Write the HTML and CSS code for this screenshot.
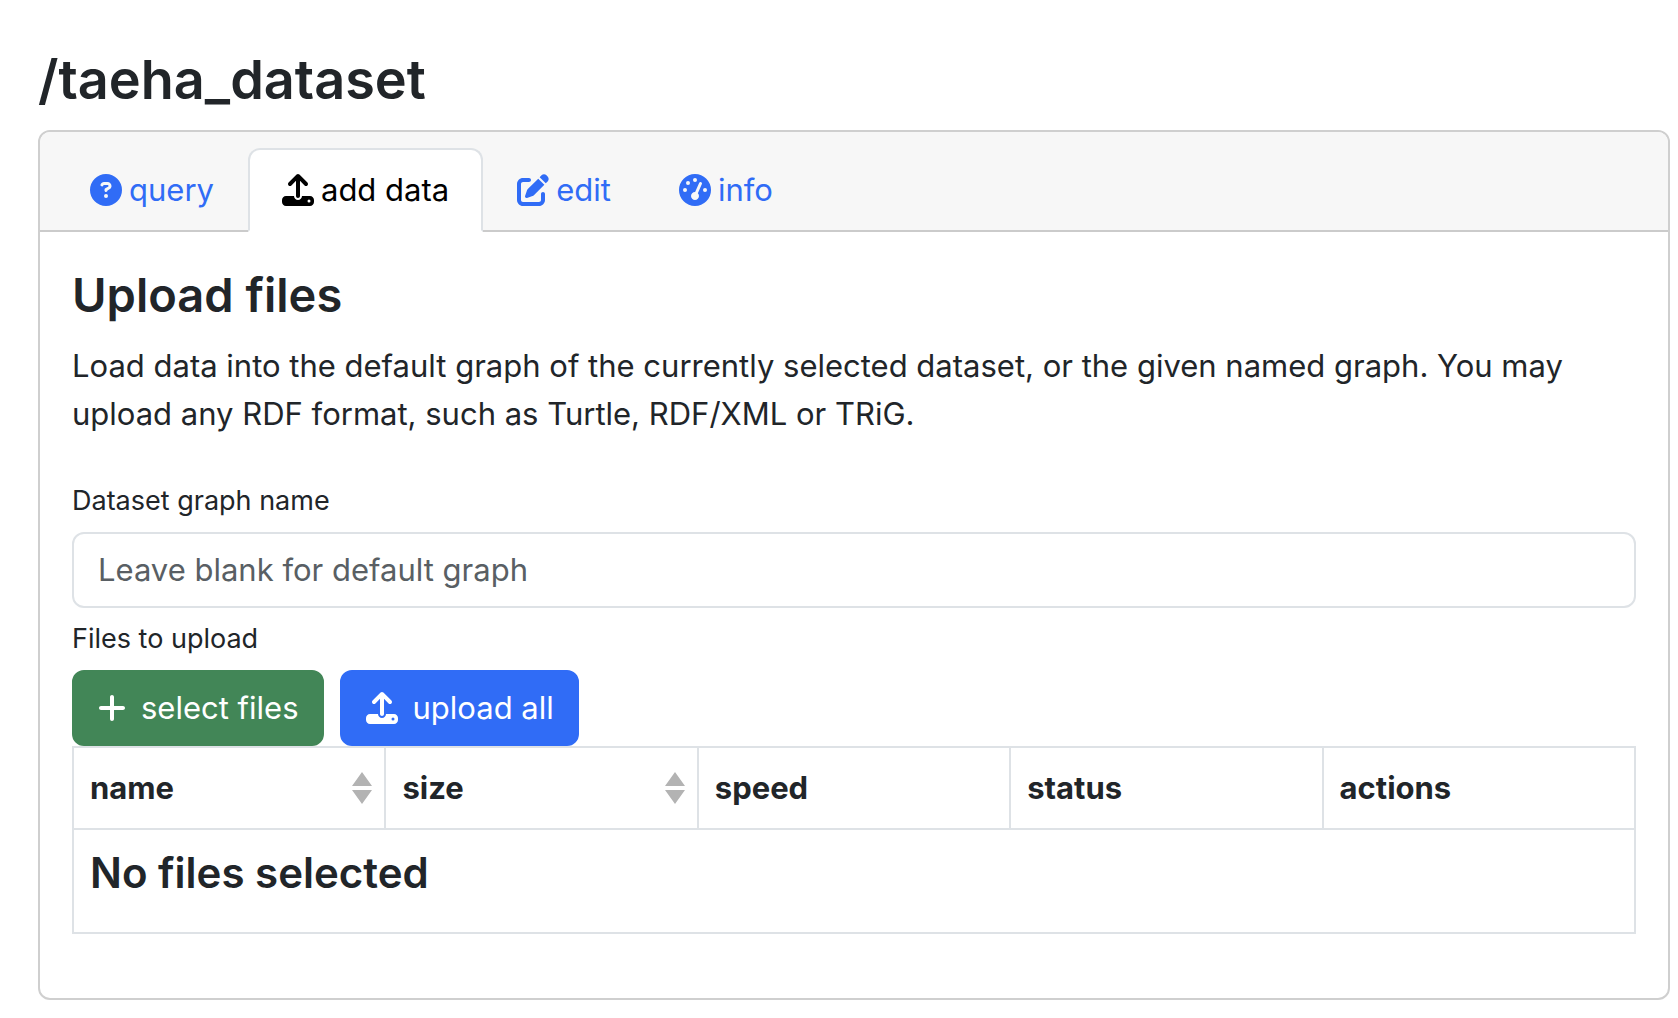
FILE: index.html
```html
<!DOCTYPE html>
<html lang="en">
<head>
<meta charset="utf-8">
<meta name="viewport" content="width=device-width, initial-scale=1">
<title>/taeha_dataset</title>
<link rel="stylesheet" href="styles.css">
</head>
<body>
<svg class="sprite" aria-hidden="true">
  <symbol id="icon-upload" viewBox="0 0 512 512"><path d="M288 109.300V352c0 17.700-14.300 32-32 32s-32-14.300-32-32V109.300l-73.400 73.400c-12.500 12.500-32.800 12.500-45.300 0s-12.500-32.800 0-45.300l128-128c12.500-12.500 32.800-12.500 45.300 0l128 128c12.500 12.500 12.500 32.800 0 45.300s-32.800 12.500-45.300 0L288 109.300zM64 352H192c0 35.300 28.700 64 64 64s64-28.700 64-64H448c35.300 0 64 28.700 64 64v32c0 35.300-28.700 64-64 64H64c-35.300 0-64-28.700-64-64V416c0-35.300 28.700-64 64-64zM432 456a24 24 0 1 0 0-48 24 24 0 1 0 0 48z"/></symbol>
  <symbol id="icon-sort" viewBox="0 0 20 32"><path d="M10 0l10 14H0zM10 32L0 18h20z"/></symbol>
</svg>
<main class="page">
  <h1 class="page-title">/taeha_dataset</h1>
  <section class="card">
    <nav class="card-header" aria-label="Dataset">
      <ul class="tabs">
        <li><a class="tab" href="#query"><svg class="icon" viewBox="0 0 512 512" aria-hidden="true"><path d="M256 512A256 256 0 1 0 256 0a256 256 0 1 0 0 512zM169.800 165.300c7.900-22.300 29.100-37.300 52.800-37.300h58.300c34.900 0 63.100 28.300 63.100 63.100c0 22.600-12.100 43.500-31.700 54.800L280 264.400c-.2 13-10.900 23.600-24 23.600c-13.300 0-24-10.700-24-24V250.500c0-8.600 4.600-16.500 12.100-20.800l44.300-25.400c4.700-2.700 7.600-7.700 7.600-13.100c0-8.400-6.800-15.100-15.100-15.100H222.600c-3.400 0-6.400 2.100-7.500 5.300l-.4 1.200c-4.400 12.500-18.200 19-30.600 14.600s-19-18.200-14.600-30.600l.4-1.200zM224 352a32 32 0 1 1 64 0 32 32 0 1 1 -64 0z"/></svg>query</a></li>
        <li><a class="tab tab-active" href="#upload" aria-current="page"><svg class="icon" aria-hidden="true"><use href="#icon-upload"/></svg>add data</a></li>
        <li><a class="tab" href="#edit"><svg class="icon" viewBox="0 0 512 512" aria-hidden="true"><path d="M471.600 21.700c-21.900-21.900-57.300-21.900-79.200 0L362.300 51.700l97.900 97.900 30.100-30.100c21.900-21.900 21.900-57.300 0-79.200L471.600 21.700zm-299.200 220c-6.100 6.100-10.800 13.600-13.500 21.900l-29.600 88.800c-2.900 8.600-.6 18.100 5.800 24.600s15.900 8.700 24.600 5.800l88.800-29.600c8.200-2.700 15.700-7.400 21.900-13.500L437.700 172.300 339.700 74.300 172.400 241.700zM96 64C43 64 0 107 0 160V416c0 53 43 96 96 96H352c53 0 96-43 96-96V320c0-17.700-14.300-32-32-32s-32 14.300-32 32v96c0 17.700-14.300 32-32 32H96c-17.700 0-32-14.300-32-32V160c0-17.700 14.300-32 32-32h96c17.700 0 32-14.300 32-32s-14.300-32-32-32H96z"/></svg>edit</a></li>
        <li><a class="tab" href="#info"><svg class="icon" viewBox="0 0 512 512" aria-hidden="true"><path d="M0 256a256 256 0 1 1 512 0A256 256 0 1 1 0 256zM288 96a32 32 0 1 0 -64 0 32 32 0 1 0 64 0zM256 416c35.300 0 64-28.700 64-64c0-17.400-6.900-33.100-18.100-44.600L366 161.700c5.300-12.100-.2-26.300-12.300-31.600s-26.300 .2-31.600 12.300L257.900 288c-.6 0-1.300 0-1.900 0c-35.300 0-64 28.700-64 64s28.700 64 64 64zM176 144a32 32 0 1 0 -64 0 32 32 0 1 0 64 0zM96 288a32 32 0 1 0 0-64 32 32 0 1 0 0 64zm352-32a32 32 0 1 0 -64 0 32 32 0 1 0 64 0z"/></svg>info</a></li>
      </ul>
    </nav>
    <form class="card-body">
      <h2 class="section-title">Upload files</h2>
      <p class="intro">Load data into the default graph of the currently selected dataset, or the given named graph. You may upload any RDF format, such as Turtle, RDF/XML or TRiG.</p>
      <label class="field-label" for="graph-name">Dataset graph name</label>
      <input class="field" id="graph-name" type="text" placeholder="Leave blank for default graph">
      <span class="field-label" id="files-label">Files to upload</span>
      <div class="actions" role="group" aria-labelledby="files-label">
        <button class="btn btn-success" type="button"><svg class="icon icon-plus" viewBox="0 0 448 512" aria-hidden="true"><path d="M256 80c0-17.700-14.300-32-32-32s-32 14.300-32 32V224H48c-17.700 0-32 14.300-32 32s14.300 32 32 32H192V432c0 17.700 14.300 32 32 32s32-14.300 32-32V288H400c17.700 0 32-14.300 32-32s-14.300-32-32-32H256V80z"/></svg>select files</button>
        <button class="btn btn-primary" type="button"><svg class="icon" aria-hidden="true"><use href="#icon-upload"/></svg>upload all</button>
      </div>
      <table class="files">
        <thead>
          <tr>
            <th scope="col"><button class="sort" type="button">name<svg class="sort-icon" aria-hidden="true"><use href="#icon-sort"/></svg></button></th>
            <th scope="col"><button class="sort" type="button">size<svg class="sort-icon" aria-hidden="true"><use href="#icon-sort"/></svg></button></th>
            <th scope="col">speed</th>
            <th scope="col">status</th>
            <th scope="col">actions</th>
          </tr>
        </thead>
        <tbody>
          <tr><td colspan="5"><h3 class="empty">No files selected</h3></td></tr>
        </tbody>
      </table>
    </form>
  </section>
</main>
</body>
</html>
```
FILE: styles.css
```css
* {
  box-sizing: border-box;
}

body {
  margin: 0;
  background: #fff;
  color: #212529;
  font-family: Inter, "Liberation Sans", sans-serif;
  font-size: 31px;
  line-height: 48px;
}

.sprite {
  display: none;
}

.page {
  padding: 45px 8px 8px 38px;
}

.page-title,
.section-title,
.empty {
  margin: 0 0 16px;
  font-weight: 600;
}

.page-title {
  font-size: 54px;
  line-height: 69px;
}

.section-title {
  font-size: 47px;
  line-height: 62px;
}

.empty {
  font-size: 42px;
  line-height: 54px;
}

.card {
  border: 2px solid #cfcfcf;
  border-radius: 12px;
}

.card-header {
  padding: 16px 16px 0;
  border-bottom: 2px solid #cbcbcb;
  border-radius: 10px 10px 0 0;
  background: #f7f7f7;
}

.tabs {
  display: flex;
  margin: 0 0 -2px;
  padding: 0;
  list-style: none;
}

.tab {
  display: flex;
  align-items: center;
  gap: 7px;
  padding: 16px 32px;
  border: 2px solid transparent;
  border-radius: 12px 12px 0 0;
  color: #306cf6;
  text-decoration: none;
}

.tab-active {
  border-color: #dee2e6 #dee2e6 #fff;
  background: #fff;
  color: #000;
}

.icon {
  flex: none;
  width: 32px;
  height: 32px;
  fill: currentColor;
}

.icon-plus {
  width: 28px;
}

.card-body {
  padding: 32px;
}

.intro {
  margin: 0 0 32px;
}

.field-label {
  display: block;
  padding: 10px 0;
  font-size: 27px;
  line-height: 42px;
}

.field {
  display: block;
  width: 100%;
  padding: 12px 24px;
  border: 2px solid #dee2e6;
  border-radius: 12px;
  background: #fff;
  color: inherit;
  font: inherit;
}

.field::placeholder {
  color: #595f64;
  opacity: 1;
}

.actions {
  display: flex;
  gap: 16px;
}

.btn {
  display: flex;
  align-items: center;
  gap: 15px;
  padding: 12px 23px 12px 24px;
  border: 2px solid transparent;
  border-radius: 12px;
  color: #fff;
  font: inherit;
}

.btn-success {
  border-color: #428657;
  background: #428657;
}

.btn-primary {
  border-color: #306cf6;
  background: #306cf6;
}

.files {
  width: 100%;
  margin-bottom: 32px;
  border-collapse: collapse;
  table-layout: fixed;
}

.files th,
.files td {
  padding: 16px;
  border: 2px solid #dee2e6;
  text-align: left;
}

.files th {
  font-weight: 700;
}

.files th:has(.sort) {
  padding-right: 12px;
}

.sort {
  display: flex;
  align-items: center;
  justify-content: space-between;
  width: 100%;
  padding: 0;
  border: 0;
  background: none;
  color: inherit;
  font: inherit;
}

.sort-icon {
  width: 20px;
  height: 32px;
  fill: #b3b3b3;
}
```
